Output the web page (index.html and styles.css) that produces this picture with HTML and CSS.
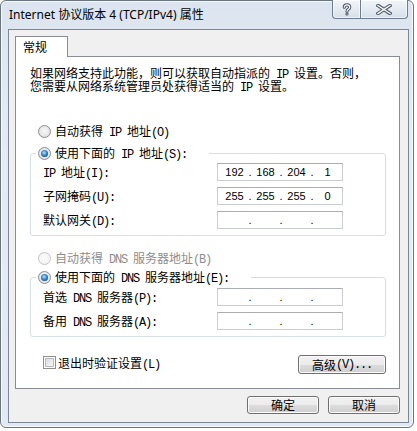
FILE: index.html
```html
<!DOCTYPE html>
<html lang="zh-CN">
<head>
<meta charset="utf-8">
<title>Internet 协议版本 4 (TCP/IPv4) 属性</title>
<link rel="stylesheet" href="styles.css">
</head>
<body>
<div class="window">
  <div class="titlebar">
    <div class="title">Internet 协议版本 4 (TCP/IPv4) 属性</div>
    <div class="caps">
      <div class="cap help">
        <svg width="10" height="13" viewBox="0 0 10 13">
          <path d="M2.3 4.2 C2.3 1.2 7.7 1.2 7.7 4.2 C7.7 6.3 5 6.3 5 8.3" fill="none" stroke="#4a5562" stroke-width="3.2" stroke-linecap="round"/>
          <circle cx="5" cy="11" r="1.6" fill="#4a5562"/>
          <path d="M2.3 4.2 C2.3 1.2 7.7 1.2 7.7 4.2 C7.7 6.3 5 6.3 5 8.3" fill="none" stroke="#fff" stroke-width="1.2" stroke-linecap="round"/>
          <circle cx="5" cy="11" r="0.6" fill="#fff"/>
        </svg>
      </div>
      <div class="cap close">
        <svg width="16" height="11" viewBox="0 0 16 11">
          <path d="M2 1.5 L14 9.5 M14 1.5 L2 9.5" stroke="#4a5562" stroke-width="3.4" stroke-linecap="square"/>
          <path d="M2 1.5 L14 9.5 M14 1.5 L2 9.5" stroke="#fff" stroke-width="1.4" stroke-linecap="square"/>
        </svg>
      </div>
    </div>
  </div>
  <div class="client">
    <div class="tabs"><div class="tab">常规</div></div>
    <div class="panel">
      <div class="intro">
        <div class="intro-line">如果网络支持此功能，则可以获取自动指派的<span class="m"> IP </span>设置。否则，</div>
        <div class="intro-line">您需要从网络系统管理员处获得适当的<span class="m"> IP </span>设置。</div>
      </div>

      <div class="radio-row r-ip">
        <span class="radio"></span><span>自动获得<span class="m"> IP </span>地址<span class="m">(O)</span></span>
      </div>

      <div class="group g-ip">
        <div class="legend"><span class="radio on"></span><span>使用下面的<span class="m"> IP </span>地址<span class="m">(S):</span></span></div>
        <div class="frow first">
          <span class="flabel"><span class="m">IP </span>地址<span class="m">(I):</span></span>
          <div class="ipbox"><span class="seg">192</span><span class="dot">.</span><span class="seg">168</span><span class="dot">.</span><span class="seg">204</span><span class="dot">.</span><span class="seg">1</span></div>
        </div>
        <div class="frow">
          <span class="flabel">子网掩码<span class="m">(U):</span></span>
          <div class="ipbox"><span class="seg">255</span><span class="dot">.</span><span class="seg">255</span><span class="dot">.</span><span class="seg">255</span><span class="dot">.</span><span class="seg">0</span></div>
        </div>
        <div class="frow">
          <span class="flabel">默认网关<span class="m">(D):</span></span>
          <div class="ipbox"><span class="seg"></span><span class="dot">.</span><span class="seg"></span><span class="dot">.</span><span class="seg"></span><span class="dot">.</span><span class="seg"></span></div>
        </div>
      </div>

      <div class="radio-row r-dns disabled">
        <span class="radio off"></span><span>自动获得<span class="m"> DNS </span>服务器地址<span class="m">(B)</span></span>
      </div>

      <div class="group g-dns">
        <div class="legend"><span class="radio on"></span><span>使用下面的<span class="m"> DNS </span>服务器地址<span class="m">(E):</span></span></div>
        <div class="frow first">
          <span class="flabel">首选<span class="m"> DNS </span>服务器<span class="m">(P):</span></span>
          <div class="ipbox"><span class="seg"></span><span class="dot">.</span><span class="seg"></span><span class="dot">.</span><span class="seg"></span><span class="dot">.</span><span class="seg"></span></div>
        </div>
        <div class="frow">
          <span class="flabel">备用<span class="m"> DNS </span>服务器<span class="m">(A):</span></span>
          <div class="ipbox"><span class="seg"></span><span class="dot">.</span><span class="seg"></span><span class="dot">.</span><span class="seg"></span><span class="dot">.</span><span class="seg"></span></div>
        </div>
      </div>

      <div class="bottom-row">
        <div class="chk-wrap"><span class="checkbox"></span><span>退出时验证设置<span class="m">(L)</span></span></div>
        <button class="btn adv">高级<span class="m">(V)...</span></button>
      </div>
    </div>
    <div class="dlg-btns">
      <button class="btn dlg">确定</button>
      <button class="btn dlg">取消</button>
    </div>
  </div>
</div>
</body>
</html>
```

FILE: styles.css
```css
html, body {
  margin: 0;
  padding: 0;
}
body {
  width: 417px;
  height: 431px;
  overflow: hidden;
  background: #fff;
  font-family: "Noto Sans CJK SC", sans-serif;
  font-size: 12px;
  color: #000;
}
.m {
  font-family: "Liberation Mono", "Noto Sans CJK SC", monospace;
  font-size: 12px;
  letter-spacing: -1.2px;
  white-space: pre;
}
.window {
  width: 414px;
  height: 428px;
  box-sizing: border-box;
  border: 1px solid #6b7581;
  border-radius: 6px;
  background: linear-gradient(180deg, #dce5ef 0%, #e4ebf4 35%, #e2e9f2 100%);
  box-shadow: inset 0 0 0 1px rgba(255,255,255,0.75);
  display: flex;
  flex-direction: column;
}
.titlebar {
  height: 28px;
  display: flex;
  justify-content: space-between;
  align-items: flex-start;
}
.title {
  margin: 6px 0 0 8px;
  line-height: 16px;
  font-family: "Noto Sans", "Noto Sans CJK SC", sans-serif;
  font-size: 12px;
  color: #000;
  white-space: nowrap;
}
.caps {
  display: flex;
  height: 19px;
  margin: -1px 5px 0 0;
}
.cap {
  box-sizing: border-box;
  height: 19px;
  border: 1px solid #6f7c8c;
  border-top: none;
  background: linear-gradient(180deg, #f1f5f9 0%, #e5ebf2 50%, #d6dfe9 100%);
  box-shadow: inset 0 0 0 1px rgba(255,255,255,0.6);
  display: flex;
  align-items: center;
  justify-content: center;
}
.cap.help {
  width: 28px;
  border-right: none;
  border-radius: 0 0 0 4px;
}
.cap.close {
  width: 48px;
  border-radius: 0 0 4px 0;
}
.client {
  margin: 0 4px 4px 7px;
  height: 394px;
  box-sizing: border-box;
  border: 1px solid #7d8896;
  background: #f0f0f0;
  padding: 6px 8px 0 6px;
}
.tabs {
  display: flex;
}
.tab {
  width: 53px;
  height: 21px;
  box-sizing: border-box;
  border: 1px solid #898c95;
  border-bottom: none;
  background: #fff;
  padding-left: 7px;
  line-height: 19px;
  margin-bottom: -1px;
  position: relative;
  z-index: 1;
}
.panel {
  height: 333px;
  box-sizing: border-box;
  border: 1px solid #898c95;
  background: #fff;
  padding: 9px 13px 0 14px;
}
.intro {
  display: flex;
  flex-direction: column;
}
.intro-line {
  height: 13px;
  line-height: 13px;
  white-space: nowrap;
}
.radio-row {
  display: flex;
  align-items: center;
  gap: 4px;
  height: 16px;
  padding-left: 8px;
  white-space: nowrap;
}
.r-ip {
  margin-top: 31px;
}
.r-dns {
  margin-top: 14px;
}
.disabled {
  color: #8d8d8d;
}
.radio {
  width: 13px;
  height: 13px;
  box-sizing: border-box;
  border-radius: 50%;
  border: 1px solid #8a8d93;
  background: radial-gradient(circle at 50% 45%, #f8f8f8 0%, #e6e6e6 60%, #d2d2d2 100%);
  position: relative;
  flex: none;
}
.radio.off {
  border-color: #c3c5c8;
  background: radial-gradient(circle at 50% 45%, #fbfbfb 0%, #f0f0f0 100%);
}
.radio.on::after {
  content: "";
  position: absolute;
  left: 2px;
  top: 2px;
  width: 7px;
  height: 7px;
  border-radius: 50%;
  background: radial-gradient(circle at 45% 40%, #b4e4fb 0%, #3d93dc 40%, #0e3a6c 85%);
}
.group {
  border: 1px solid #d5dfe5;
  border-radius: 3px;
  padding: 0 0 6px 12px;
}
.g-ip {
  margin-top: 14px;
}
.g-dns {
  margin-top: 11px;
}
.legend {
  display: flex;
  align-items: center;
  gap: 4px;
  width: fit-content;
  height: 16px;
  margin: -9px 0 0 -7px;
  padding: 0 22px 0 2px;
  background: #fff;
  white-space: nowrap;
}
.frow {
  display: flex;
  align-items: center;
  height: 18px;
  margin-top: 6px;
}
.g-ip .frow.first {
  margin-top: 2px;
}
.g-dns .frow.first {
  margin-top: 3px;
}
.flabel {
  width: 174px;
  white-space: nowrap;
}
.ipbox {
  width: 126px;
  height: 18px;
  box-sizing: border-box;
  border: 1px solid #c9ccd2;
  border-top-color: #abadb3;
  background: #fff;
  display: flex;
  align-items: center;
  padding-left: 4px;
  font-family: "Liberation Sans", sans-serif;
  font-size: 11px;
}
.seg {
  width: 25px;
  text-align: center;
}
.dot {
  width: 6px;
  text-align: center;
}
.bottom-row {
  display: flex;
  justify-content: space-between;
  align-items: flex-start;
  margin-top: 18px;
  padding-left: 13px;
}
.chk-wrap {
  display: flex;
  align-items: center;
  gap: 2px;
  height: 13px;
  margin-top: 1px;
  white-space: nowrap;
}
.checkbox {
  width: 13px;
  height: 13px;
  box-sizing: border-box;
  border: 1px solid #8e8f8f;
  background: linear-gradient(135deg, #cfd2d6 0%, #eceef0 60%, #f8f8f8 100%);
  box-shadow: inset 0 0 0 1px #fff, inset 0 0 0 2px #b8bcc2;
  flex: none;
}
.btn {
  box-sizing: border-box;
  border: 1px solid #707070;
  border-radius: 3px;
  background: linear-gradient(180deg, #f2f2f2 0%, #ebebeb 50%, #dddddd 50%, #cfcfcf 100%);
  box-shadow: inset 0 0 0 1px #fbfbfb;
  font-family: "Noto Sans CJK SC", sans-serif;
  font-size: 12px;
  color: #000;
  padding: 0;
  margin: 0;
  line-height: 16px;
  display: flex;
  align-items: center;
  justify-content: center;
}
.adv {
  width: 88px;
  height: 19px;
}
.dlg-btns {
  display: flex;
  justify-content: flex-end;
  gap: 9px;
  margin-top: 7px;
}
.dlg {
  width: 72px;
  height: 18px;
}
```
